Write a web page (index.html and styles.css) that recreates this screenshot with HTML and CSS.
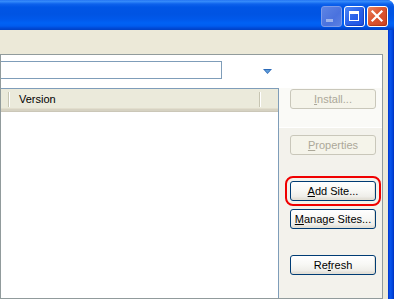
FILE: index.html
```html
<!DOCTYPE html>
<html>
<head>
<meta charset="utf-8">
<link rel="stylesheet" href="styles.css">
</head>
<body>
<div class="window">
  <div class="titlebar">
    <div class="tb-btn tb-min"><svg width="19" height="19" viewBox="0 0 19 19"><rect x="4" y="12" width="7" height="3" fill="#9DB3EC"/></svg></div>
    <div class="tb-btn tb-max"><svg width="19" height="19" viewBox="0 0 19 19"><path d="M4 4h10v10H4z M5 7v6h8V7z" fill="#fff" fill-rule="evenodd"/></svg></div>
    <div class="tb-btn tb-close"><svg width="19" height="19" viewBox="0 0 19 19"><path d="M4.5 4.5l9 9M13.5 4.5l-9 9" stroke="#fff" stroke-width="2.2" stroke-linecap="square"/></svg></div>
  </div>
  <div class="frame">
    <div class="client">
      <div class="panel">
        <div class="top-row">
          <div class="combo"></div>
          <svg class="drop" width="9" height="6" viewBox="0 0 9 6"><path d="M0 0h9L4.5 5z" fill="#2C6AB8"/><path d="M2 1h5L4.5 4z" fill="#5E9BD8"/></svg>
        </div>
        <div class="main">
          <div class="table">
            <div class="thead">
              <div class="th th-first"></div>
              <div class="th th-version">Version</div>
              <div class="th th-rest"></div>
            </div>
            <div class="tbody"></div>
          </div>
          <div class="side">
            <div class="side-top">
              <div class="btn disabled"><span><u>I</u>nstall...</span></div>
            </div>
            <div class="side-bottom">
              <div class="btn disabled"><span><u>P</u>roperties</span></div>
              <div class="btn highlight"><span><u>A</u>dd Site...</span></div>
              <div class="btn btn-manage"><span><u>M</u>anage Sites...</span></div>
              <div class="btn btn-refresh"><span>Re<u>f</u>resh</span></div>
            </div>
          </div>
        </div>
      </div>
    </div>
    <div class="frame-right"></div>
  </div>
</div>
</body>
</html>
```
FILE: styles.css
```css
html, body {
  margin: 0;
  padding: 0;
  background: #ffffff;
}
body {
  font-family: "Liberation Sans", Arial, sans-serif;
  font-size: 11px;
  color: #000;
}
.window {
  width: 394px;
  height: 299px;
  display: flex;
  flex-direction: column;
  overflow: hidden;
  border-top-right-radius: 7px;
  background: #0054E3;
}
.titlebar {
  height: 30px;
  box-sizing: border-box;
  display: flex;
  justify-content: flex-end;
  align-items: flex-start;
  gap: 2px;
  padding: 6px 6px 0 0;
  background: linear-gradient(to bottom,
    #1A6BF0 0px, #3B8EFB 1px, #2C83F8 2px, #0E62EC 4px, #0055E5 7px,
    #0054E3 14px, #0058EA 19px, #0062F5 23px, #005CEF 26px, #004BD8 28px, #0040C4 30px);
}
.tb-btn {
  width: 21px;
  height: 21px;
  box-sizing: border-box;
  border: 1px solid #fff;
  border-radius: 3px;
  display: flex;
  align-items: center;
  justify-content: center;
}
.tb-btn svg { display: block; }
.tb-min {
  border-color: #7C9BEA;
  background: linear-gradient(135deg, #5D84E4 0%, #4A72DE 60%, #5D80E2 100%);
}
.tb-max {
  background: linear-gradient(135deg, #4D86F5 0%, #2A62EA 50%, #1E52E2 100%);
  box-shadow: inset -1px -1px 1px rgba(0,20,120,0.35);
}
.tb-close {
  background: linear-gradient(135deg, #E9835F 0%, #DC5530 45%, #CE4421 100%);
  box-shadow: inset -1px -1px 1px rgba(120,20,0,0.35);
}
.frame {
  flex: 1;
  display: flex;
  min-height: 0;
}
.client {
  flex: 1;
  background: #ECE9D8;
  padding: 24px 5px 0 0;
  display: flex;
}
.frame-right {
  width: 6px;
  background: linear-gradient(to right, #0033CC 0%, #0A55EE 35%, #0048E0 70%, #0030BC 100%);
}
.panel {
  flex: 1;
  border: 1px solid #919B9C;
  background: #ffffff;
  display: flex;
  flex-direction: column;
  overflow: hidden;
}
.top-row {
  height: 33px;
  display: flex;
  align-items: flex-start;
}
.combo {
  width: 221px;
  height: 18px;
  margin-top: 6px;
  box-sizing: border-box;
  border: 1px solid #7F9DB9;
  border-left: none;
  background: #fff;
}
.drop {
  margin-left: 41px;
  margin-top: 14px;
  display: block;
}
.main {
  flex: 1;
  display: flex;
  min-height: 0;
}
.table {
  width: 278px;
  box-sizing: border-box;
  border-top: 1px solid #7F9DB9;
  border-right: 1px solid #7F9DB9;
  display: flex;
  flex-direction: column;
  background: #fff;
}
.thead {
  height: 23px;
  box-sizing: border-box;
  display: flex;
  background: #EBEADB;
  border-bottom: 3px solid #D6D2C2;
  box-shadow: inset 0 -1px 0 #E2DECD;
  position: relative;
}
.thead::after {
  content: "";
  position: absolute;
  left: 0;
  right: 0;
  bottom: -3px;
  height: 1px;
  background: #CBC7B8;
}
.th {
  height: 100%;
  display: flex;
  align-items: center;
}
.th-first {
  width: 7px;
}
.th-version {
  width: 250px;
  padding-left: 11px;
  box-sizing: border-box;
  position: relative;
}
.th-version::before,
.th-version::after {
  content: "";
  position: absolute;
  top: 3px;
  bottom: 2px;
  width: 1px;
  background: #C7C5B2;
  box-shadow: 1px 0 0 #fff;
}
.th-version::before { left: 0; }
.th-version::after { right: -2px; }
.th-rest { flex: 1; }
.tbody { flex: 1; }
.side {
  flex: 1;
  display: flex;
  flex-direction: column;
  background: #F3F2EC;
}
.side-top {
  height: 40px;
  padding-top: 1px;
  background: #FAFAF7;
  border-bottom: 1px solid #ffffff;
  box-sizing: border-box;
}
.side-bottom {
  flex: 1;
  padding-top: 7px;
  display: flex;
  flex-direction: column;
}
.btn {
  width: 86px;
  height: 20px;
  margin-left: 11px;
  box-sizing: border-box;
  border: 1px solid #003C74;
  border-radius: 3px;
  background: linear-gradient(to bottom, #FFFFFF 0%, #F8F8F5 45%, #EFEEE9 80%, #DCD8CE 100%);
  box-shadow: inset -1px -1px 0 #E3E0D6;
  display: flex;
  align-items: center;
  justify-content: center;
  color: #000;
  white-space: nowrap;
}
.btn u { text-decoration-thickness: 1px; text-underline-offset: 1px; }
.btn.disabled {
  border-color: #C9C7BA;
  background: #F5F4EA;
  box-shadow: none;
  color: #ACA899;
}
.side-bottom .btn + .btn { margin-top: 26px; }
.side-bottom .btn.btn-manage { margin-top: 8px; }
.btn.highlight {
  outline: 2px solid #F00000;
  outline-offset: 3px;
}
```
